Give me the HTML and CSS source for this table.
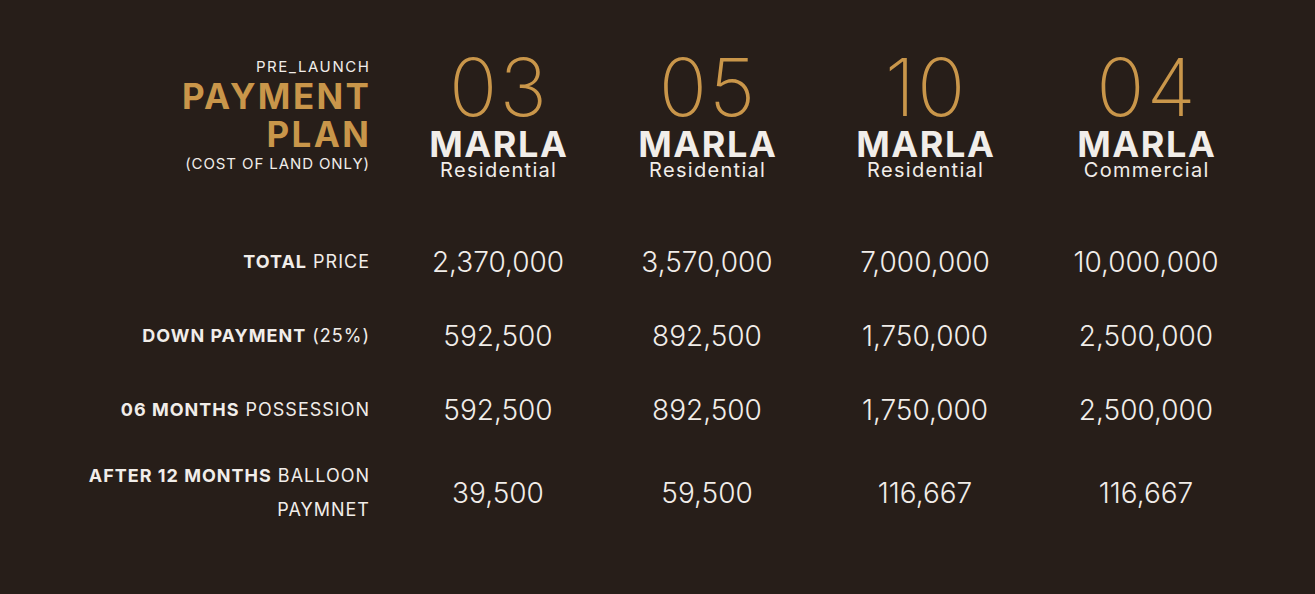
FILE: index.html
```html
<!DOCTYPE html>
<html lang="en">
<head>
<meta charset="utf-8">
<title>Payment Plan</title>
<link rel="stylesheet" href="styles.css">
</head>
<body>
<section class="plan">
  <div class="grid head">
    <div class="title">
      <div class="pre">PRE_LAUNCH</div>
      <div class="big">PAYMENT<br>PLAN</div>
      <div class="note">(COST OF LAND ONLY)</div>
    </div>
    <div class="size"><div class="num">03</div><div class="unit">MARLA</div><div class="kind">Residential</div></div>
    <div class="size"><div class="num">05</div><div class="unit">MARLA</div><div class="kind">Residential</div></div>
    <div class="size"><div class="num">10</div><div class="unit">MARLA</div><div class="kind">Residential</div></div>
    <div class="size"><div class="num">04</div><div class="unit">MARLA</div><div class="kind">Commercial</div></div>
  </div>

  <div class="grid row">
    <div class="label"><b>TOTAL</b> PRICE</div>
    <div class="val">2,370,000</div>
    <div class="val">3,570,000</div>
    <div class="val">7,000,000</div>
    <div class="val">10,000,000</div>
  </div>
  <div class="grid row">
    <div class="label"><b>DOWN PAYMENT</b> (25%)</div>
    <div class="val">592,500</div>
    <div class="val">892,500</div>
    <div class="val">1,750,000</div>
    <div class="val">2,500,000</div>
  </div>
  <div class="grid row">
    <div class="label"><b>06 MONTHS</b> POSSESSION</div>
    <div class="val">592,500</div>
    <div class="val">892,500</div>
    <div class="val">1,750,000</div>
    <div class="val">2,500,000</div>
  </div>
  <div class="grid row">
    <div class="label"><b>AFTER 12 MONTHS</b> BALLOON<br>PAYMNET</div>
    <div class="val">39,500</div>
    <div class="val">59,500</div>
    <div class="val">116,667</div>
    <div class="val">116,667</div>
  </div>
</section>
</body>
</html>
```
FILE: styles.css
```css
html, body {
  margin: 0;
  padding: 0;
}
body {
  background: #271e19;
  color: #f1ede9;
  font-family: "Inter", "Liberation Sans", sans-serif;
  width: 1315px;
  height: 594px;
  overflow: hidden;
}
.plan {
  padding-top: 56px;
}
.grid {
  display: grid;
  grid-template-columns: 390px 216px 202px 234px 208px;
}
.title {
  text-align: right;
  padding-right: 21px;
  padding-top: 1px;
}
.pre {
  font-size: 15px;
  font-weight: 400;
  line-height: 20px;
  letter-spacing: 1.6px;
  margin-right: -1.6px;
}
.big {
  color: #c9964a;
  font-size: 35px;
  font-weight: 700;
  line-height: 38px;
  letter-spacing: 2.4px;
  margin-right: -2.4px;
}
.note {
  font-size: 15px;
  line-height: 18px;
  letter-spacing: 0.9px;
  margin-right: -0.9px;
  margin-top: 2px;
}
.size {
  text-align: center;
}
.num {
  color: #c9964a;
  font-size: 80px;
  font-weight: 200;
  line-height: 70px;
  letter-spacing: 2px;
  padding-left: 2px;
  margin-top: -4px;
  margin-bottom: 4px;
}
.unit {
  font-size: 36px;
  font-weight: 700;
  line-height: 36px;
  letter-spacing: 1.6px;
  padding-left: 1.6px;
}
.kind {
  font-size: 20px;
  line-height: 20px;
  letter-spacing: 1.3px;
  padding-left: 1.3px;
  margin-top: -2px;
}
.head {
  margin-bottom: 45px;
}
.row {
  padding: 12px 0;
  align-items: center;
}
.label {
  text-align: right;
  padding-right: 20px;
  font-size: 18px;
  line-height: 34px;
  font-weight: 400;
  letter-spacing: 1px;
}
.label b {
  font-weight: 700;
}
.val {
  text-align: center;
  font-size: 28px;
  font-weight: 300;
  line-height: 50px;
}
```
